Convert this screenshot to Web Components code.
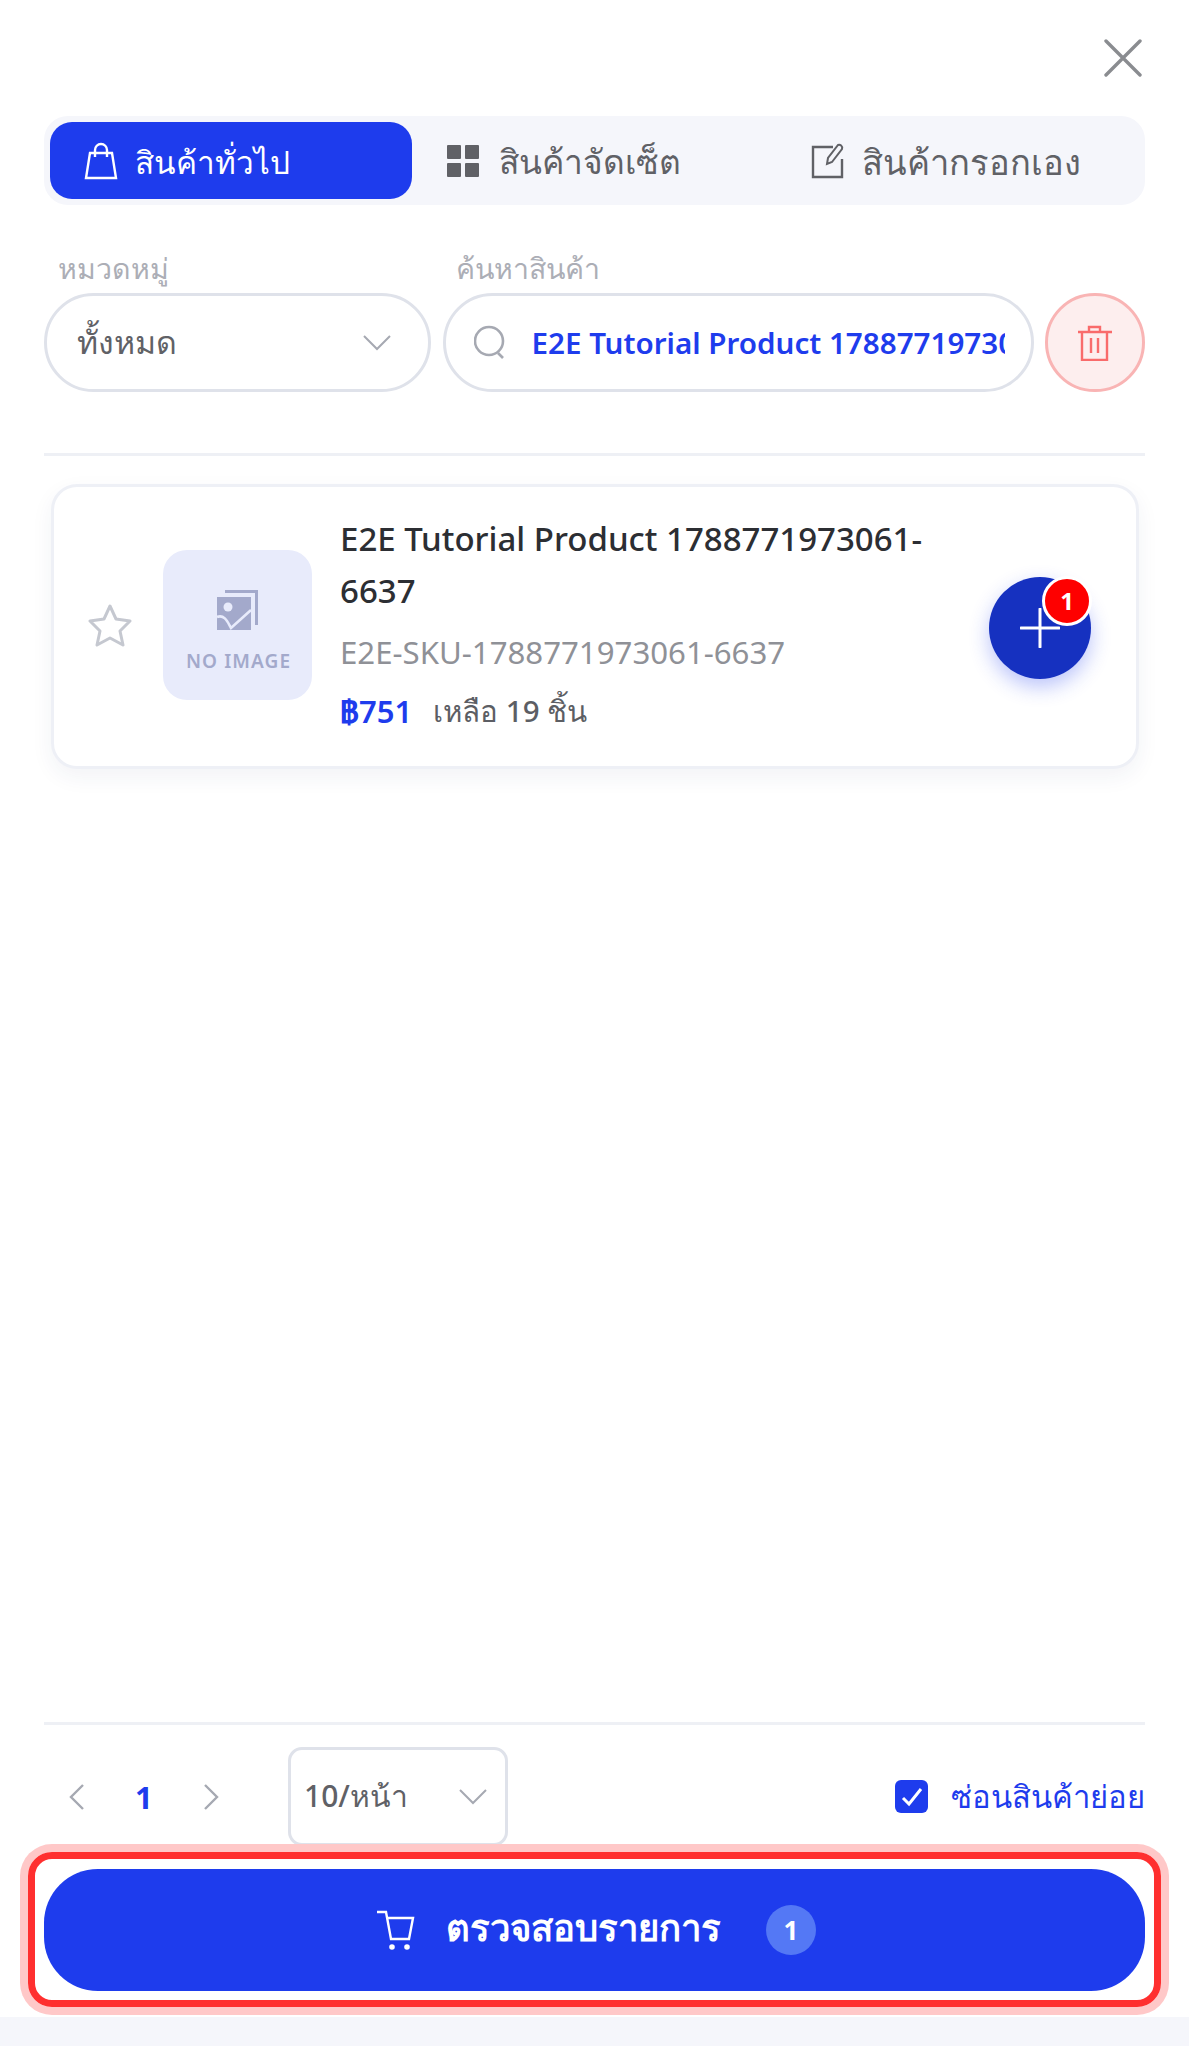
<!DOCTYPE html>
<html lang="th"><head><meta charset="utf-8"><style>
html,body{margin:0;padding:0;background:#fff;}
body{font-family:"Noto Sans",sans-serif;color:#5f6167;}
</style></head><body>
<app-page>
  <close-bar></close-bar>
  <tab-bar></tab-bar>
  <filter-row></filter-row>
  <h-rule></h-rule>
  <product-card></product-card>
  <h-rule class="low"></h-rule>
  <pager-row></pager-row>
  <checkout-bar></checkout-bar>
  <foot-strip></foot-strip>
</app-page>
<script>
function def(name,html){customElements.define(name,class extends HTMLElement{constructor(){super();this.attachShadow({mode:'open'}).innerHTML=html;}});}
const chev='<svg width="30" height="20" viewBox="0 0 30 20" fill="none" stroke="#a6a9b2" stroke-width="2"><path d="M2 3l13 13L28 3"/></svg>';
def('app-page',`<style>:host{display:flex;flex-direction:column;height:2046px;width:1189px;position:relative;overflow:hidden;box-sizing:border-box;padding:0 44px;background:#fff}
::slotted(h-rule.low){margin-top:auto}</style><slot></slot>`);
def('close-bar',`<style>:host{display:flex;justify-content:flex-end;height:116px;padding-top:39px;box-sizing:border-box}svg{margin-right:3px}</style>
<svg width="38" height="38" viewBox="0 0 38 38" stroke="#8a8c90" stroke-width="3.4" stroke-linecap="round"><path d="M2 2l34 34M36 2L2 36"/></svg>`);
def('tab-bar',`<style>:host{display:flex;height:89px;background:#f5f6fb;border-radius:24px;padding:6px;box-sizing:border-box;font-size:33.5px;line-height:77px;font-weight:500;color:#606166}
.t{display:flex;align-items:center;justify-content:center;gap:20px;border-radius:22px;white-space:nowrap;box-sizing:border-box}
.t span{padding-top:2px}
.a{flex:0 0 362px;background:#1e3ced;color:#fff;justify-content:flex-start;padding-left:34px;gap:17px;font-size:31.5px}
.g{flex:0 0 304px}.m{flex:1;padding-left:37px;gap:17px;font-size:34.5px}</style>
<div class="t a"><svg width="34" height="38" viewBox="0 0 34 38" fill="none" stroke="#fff" stroke-width="2.4"><path d="M6 11h22l4 25H2z"/><path d="M11 15V8a6 6 0 0 1 12 0v7"/></svg><span>สินค้าทั่วไป</span></div>
<div class="t g"><svg width="32" height="32" viewBox="0 0 32 32" fill="#606166"><rect width="14" height="14" rx="1"/><rect x="18" width="14" height="14" rx="1"/><rect y="18" width="14" height="14" rx="1"/><rect x="18" y="18" width="14" height="14" rx="1"/></svg><span>สินค้าจัดเซ็ต</span></div>
<div class="t m"><svg width="34" height="36" viewBox="0 0 34 36" fill="none" stroke="#606166" stroke-width="2.4"><path d="M22 4H2v30h29V16"/><path d="M16 21l1-6L27 2c2-1 5 1 4 4L21 19z" stroke-width="2"/></svg><span>สินค้ากรอกเอง</span></div>`);
def('filter-row',`<style>:host{display:grid;grid-template-columns:387px 591px 100px;column-gap:11.5px;margin-top:41px}
.l{font-size:28.5px;line-height:44px;color:#acaeb6;padding-left:14px;height:47px}
.b{height:99px;box-sizing:border-box;border:3px solid #dfe2ea;border-radius:50px;display:flex;align-items:center;font-size:32px}
.sel{padding:0 36px 0 30px;justify-content:space-between;color:#606166;font-weight:500}
.s{padding:0 26px 0 28px;gap:24px;color:#1e3ced;font-weight:600;font-size:29.6px}
.s span{overflow:hidden;white-space:nowrap;flex:1}
.d{background:#fdeeee;border-color:#f9b4b4;justify-content:center;width:100px}
.l2{padding-left:13px}</style>
<div class="l">หมวดหมู่</div><div class="l l2">ค้นหาสินค้า</div><div></div>
<div class="b sel"><span>ทั้งหมด</span>${chev}</div>
<div class="b s"><svg width="34" height="36" viewBox="0 0 34 36" fill="none" stroke="#a6a9b2" stroke-width="2.6" style="flex:none"><circle cx="15" cy="16" r="14"/><path d="M24 28l5 5"/></svg><span>E2E Tutorial Product 1788771973061-6637</span></div>
<div class="b d"><svg width="36" height="36" viewBox="0 0 36 36" fill="none" stroke="#f96b6b" stroke-width="2.4"><path d="M1 7h34M12 7V2h11v5M5 7v28h25V7M14 13v15M21 13v15"/></svg></div>`);
def('h-rule',`<style>:host{display:block;height:3px;background:#eef0f5;margin-top:61px}</style>`);
def('foot-strip',`<style>:host{display:block;height:29px;margin:0 -44px;background:#f5f6fb;flex:none}</style>`);
def('product-card',`<style>:host{display:flex;align-items:center;box-sizing:border-box;margin:28px 6px 0 7px;height:285px;border:3px solid #eef0f6;border-radius:26px;box-shadow:0 8px 22px rgba(30,45,110,.06);padding:0 46px 4px 34px;position:relative;background:#fff}
.star{flex:none;width:44px;margin-right:31px}
.img{flex:none;width:149px;height:150px;background:#e8ebfb;border-radius:24px;display:flex;flex-direction:column;align-items:center;padding-top:40px;box-sizing:border-box;margin-right:28px}
.img svg{margin-left:0}
.img b{font-size:19px;font-weight:600;color:#a3a9cb;letter-spacing:1.1px;line-height:26px;margin-top:18px;white-space:nowrap;padding-left:2px}
.info{flex:1;min-width:0;margin-top:-2px}
.t{font-size:33px;line-height:52px;color:#2c2e33;font-weight:500;width:610px}
.k{font-size:31.2px;line-height:44px;color:#8f9197;margin-top:13px;font-weight:400;white-space:nowrap}
.p{display:flex;align-items:center;gap:21px;margin-top:14px;font-size:31px;line-height:46px;color:#5c5e64;font-weight:500}
.p b{color:#1e3ced;font-weight:600}.p span{font-size:29.5px}
.add{position:absolute;left:935px;top:90px;width:102px;height:102px;border-radius:50%;background:#1631c0;box-shadow:0 8px 20px rgba(30,60,237,.3);display:flex;align-items:center;justify-content:center}
.n{position:absolute;right:-1px;top:-1px;width:44px;height:44px;border-radius:50%;background:#fe0000;border:3px solid #fff;color:#fff;font-size:24px;font-weight:700;line-height:44px;text-align:center}</style>
<svg class="star" width="44" height="44" viewBox="0 0 44 44" fill="none" stroke="#c5c8d0" stroke-width="3" stroke-linejoin="round"><path d="M22 3l6 13 14 2-10 10 3 14-13-7-13 7 3-14L2 18l14-2z"/></svg>
<div class="img"><svg width="41" height="40" viewBox="0 0 41 40" fill="#a3a9cb"><path d="M8 0h33v35h-3V3H8z"/><path d="M0 7h34v33H0z"/><circle cx="11" cy="17" r="4.5" fill="#e8ebfb"/><path d="M0 27c8-3 11 6 14 11L34 20" fill="none" stroke="#e8ebfb" stroke-width="2.6"/></svg><b>NO IMAGE</b></div>
<div class="info"><div class="t">E2E Tutorial Product 1788771973061-6637</div><div class="k">E2E-SKU-1788771973061-6637</div><div class="p"><b>฿751</b><span>เหลือ 19 ชิ้น</span></div></div>
<div class="add"><svg width="40" height="40" viewBox="0 0 40 40" stroke="#fff" stroke-width="3" stroke-linecap="round"><path d="M20 1v38M1 20h38"/></svg><div class="n">1</div></div>`);
def('pager-row',`<style>:host{display:flex;align-items:center;height:99px;margin-top:22px;font-size:31px;font-weight:500;color:#606166}
.c{width:20px;margin-left:24px}.one{color:#1e3ced;font-weight:700;margin-left:47px;width:16px}.r{margin-left:50px}
.ps{margin-left:67px;width:220px;height:99px;box-sizing:border-box;border:3px solid #dfe2ea;border-radius:14px;display:flex;align-items:center;justify-content:space-between;padding:0 17px 0 13px;font-size:30px}
.ck{margin-left:auto;width:33px;height:33px;border-radius:6px;background:#1e3ced;display:flex;align-items:center;justify-content:center}
.tx{margin-left:23px;color:#1e3ced;font-weight:500;font-size:31px}</style>
<svg class="c" width="20" height="30" viewBox="0 0 20 30" fill="none" stroke="#a6a9b2" stroke-width="2.4"><path d="M15 3L3 15l12 12"/></svg><span class="one">1</span><svg class="c r" width="20" height="30" viewBox="0 0 20 30" fill="none" stroke="#a6a9b2" stroke-width="2.4"><path d="M4 3l12 12L4 27"/></svg>
<div class="ps"><span>10/หน้า</span>${chev}</div>
<div class="ck"><svg width="22" height="20" viewBox="0 0 22 20" fill="none" stroke="#fff" stroke-width="3"><path d="M2 11l6 6L20 2"/></svg></div><span class="tx">ซ่อนสินค้าย่อย</span>`);
def('checkout-bar',`<style>:host{display:flex;flex:none;align-items:center;justify-content:center;height:122px;margin-top:23px;margin-bottom:26px;background:#1e3ced;border-radius:54px;color:#fff;font-size:36.5px;font-weight:700;position:relative;padding-left:4px;box-sizing:border-box}
.c{margin-right:31px}.tx{padding-bottom:5px}.n{margin-left:45px;width:50px;height:50px;border-radius:50%;background:#5478f5;font-size:26px;line-height:50px;text-align:center;font-weight:700}
.hl{position:absolute;left:-16px;right:-16px;top:-17px;bottom:-16px;border:7px solid #ff2f2f;border-radius:24px;box-shadow:0 0 0 8px #ffc8c8;pointer-events:none;box-sizing:border-box}</style>
<svg class="c" width="38" height="40" viewBox="0 0 38 40" fill="none" stroke="#fff" stroke-width="2.4"><path d="M0 2h9l5 27h18l4-21H10"/><circle cx="15" cy="37" r="1.6" fill="#fff"/><circle cx="30" cy="37" r="1.6" fill="#fff"/></svg><span class="tx">ตรวจสอบรายการ</span><span class="n">1</span><div class="hl"></div>`);
</script>
</body></html>
